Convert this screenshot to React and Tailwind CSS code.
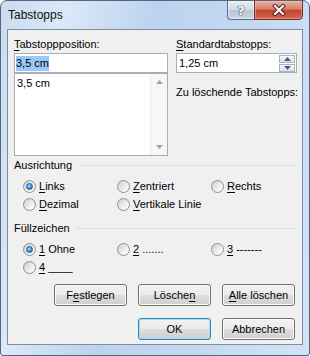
import React from 'react';

const U = ({ children }) => (
    <span className="underline underline-offset-[2px] decoration-[1px]">{children}</span>
);

function Radio({ checked, children }) {
    return (
        <div className="flex items-center h-[13px] gap-[3px]">
            <span className="w-[13px] h-[13px] rounded-full border border-[#8e8f8f] bg-[linear-gradient(135deg,#cfd0d0,#f4f4f4_70%,#ffffff)] flex items-center justify-center shrink-0">
                {checked && (
                    <span className="w-[7px] h-[7px] rounded-full bg-[radial-gradient(circle_at_40%_35%,#b4e0ff,#3a8be0_55%,#184f91)] border border-[#1f5a9a]" />
                )}
            </span>
            <span className="leading-[13px] whitespace-nowrap">{children}</span>
        </div>
    );
}

function Btn({ children, def }) {
    return (
        <button
            className={
                'w-[73px] h-[22px] rounded-[3px] border text-[11px] leading-[13px] text-black bg-[linear-gradient(#f2f2f2_0%,#ebebeb_48%,#dddddd_52%,#cfcfcf_100%)] ' +
                (def
                    ? 'border-[#3c7fb1] shadow-[inset_0_0_0_1px_#9fdcf5]'
                    : 'border-[#707070] shadow-[inset_0_0_0_1px_#fbfbfb]')
            }
        >
            {children}
        </button>
    );
}

function Section({ title }) {
    return (
        <div className="flex items-center h-[13px] pl-[6px] pr-[5px]">
            <span className="leading-[13px]">{title}</span>
            <div className="flex-1 h-px bg-[#d5dfe5] ml-[6px]" />
        </div>
    );
}

export default function App() {
    return (
        <div className="w-[310px] h-[356px] flex flex-col rounded-t-[7px] rounded-b-[3px] border border-[#56657a] bg-[linear-gradient(100deg,#cadcf1_0%,#dbe8f7_18%,#bcd3ef_42%,#c3d8f1_68%,#d2e3f5_100%)] font-['Liberation_Sans',Arial,sans-serif] text-[11px] text-black overflow-hidden">
            {/* title bar */}
            <div className="h-[28px] flex items-start justify-between shrink-0">
                <span className="mt-[7px] pl-[7px] text-[12px] leading-[14px] text-[#111]">Tabstopps</span>
                <div className="flex mt-[-1px] mr-[6px]">
                    <div className="w-[27px] h-[20px] rounded-bl-[4px] border border-[#5d6d82] border-r-0 bg-[linear-gradient(#e6edf5_0%,#d3dde9_48%,#b9c7d8_52%,#c9d6e4_100%)] shadow-[inset_0_0_0_1px_rgba(255,255,255,0.5)] flex items-center justify-center">
                        <span className="font-['DejaVu_Sans',sans-serif] font-bold text-[13px] leading-[13px] text-white [text-shadow:0_0_1px_#2d3d52,0_0_1px_#2d3d52,0_0_1px_#2d3d52]">?</span>
                    </div>
                    <div className="w-[49px] h-[20px] rounded-br-[4px] border border-[#6e2c24] bg-[linear-gradient(#ebb0a0_0%,#d8806b_45%,#c2432e_52%,#d3684e_100%)] shadow-[inset_0_0_0_1px_rgba(255,200,190,0.45)] flex items-center justify-center">
                        <svg width="14" height="12" viewBox="0 0 14 12">
                            <path d="M3 2 L11 10 M11 2 L3 10" stroke="#4a1a14" strokeWidth="4" strokeLinecap="square" />
                            <path d="M3 2 L11 10 M11 2 L3 10" stroke="#ffffff" strokeWidth="2.2" strokeLinecap="square" />
                        </svg>
                    </div>
                </div>
            </div>

            {/* content */}
            <div className="mx-[6px] mb-[10px] h-[316px] border border-[#7d8da2] bg-[#f0f0f0] pt-[8px] flex flex-col">
                <div className="flex pl-[6px]">
                    {/* left column */}
                    <div className="w-[154px] flex flex-col">
                        <span className="leading-[13px] h-[13px]"><U>T</U>abstoppposition:</span>
                        <div className="mt-[2px] h-[20px] border border-[#abadb3] bg-white flex items-center pl-[1px]">
                            <span className="bg-[#99c9f7] leading-[15px]">3,5 cm</span>
                        </div>
                        <div className="h-[83px] border border-[#abadb3] bg-white flex">
                            <div className="flex-1 pl-[2px] pt-[3px] leading-[13px]">3,5 cm</div>
                            <div className="w-[17px] bg-[#f7f7f7] border-l border-[#ececec] flex flex-col justify-between items-center py-[6px]">
                                <svg width="7" height="4" viewBox="0 0 7 4"><path d="M0 4 L3.5 0 L7 4 Z" fill="#a3a3a3" /></svg>
                                <svg width="7" height="4" viewBox="0 0 7 4"><path d="M0 0 L3.5 4 L7 0 Z" fill="#a3a3a3" /></svg>
                            </div>
                        </div>
                    </div>
                    {/* right column */}
                    <div className="w-[121px] ml-[8px] flex flex-col">
                        <span className="leading-[13px] h-[13px]"><U>S</U>tandardtabstopps:</span>
                        <div className="mt-[2px] h-[20px] border border-[#abadb3] bg-white flex items-center pl-[2px]">
                            <span className="flex-1 leading-[13px]">1,25 cm</span>
                            <div className="flex flex-col gap-[1px] mr-[1px]">
                                <div className="w-[16px] h-[8px] border border-[#a9b3bf] bg-[linear-gradient(#f5f7f9,#dde3ea)] flex items-center justify-center">
                                    <svg width="7" height="4" viewBox="0 0 7 4"><path d="M0 4 L3.5 0 L7 4 Z" fill="#4b5d80" /></svg>
                                </div>
                                <div className="w-[16px] h-[8px] border border-[#a9b3bf] bg-[linear-gradient(#f5f7f9,#dde3ea)] flex items-center justify-center">
                                    <svg width="7" height="4" viewBox="0 0 7 4"><path d="M0 0 L3.5 4 L7 0 Z" fill="#4b5d80" /></svg>
                                </div>
                            </div>
                        </div>
                        <span className="mt-[13px] leading-[13px] whitespace-nowrap">Zu löschende Tabstopps:</span>
                    </div>
                </div>

                <div className="mt-[3px]">
                    <Section title="Ausrichtung" />
                </div>
                <div className="mt-[8px] grid grid-cols-[94px_94px_1fr] gap-y-[5px] pl-[15px]">
                    <Radio checked><U>L</U>inks</Radio>
                    <Radio><U>Z</U>entriert</Radio>
                    <Radio><U>R</U>echts</Radio>
                    <Radio><U>D</U>ezimal</Radio>
                    <Radio><U>V</U>ertikale Linie</Radio>
                </div>

                <div className="mt-[11px]">
                    <Section title="Füllzeichen" />
                </div>
                <div className="mt-[8px] grid grid-cols-[94px_94px_1fr] gap-y-[5px] pl-[15px]">
                    <Radio checked><U>1</U> Ohne</Radio>
                    <Radio><U>2</U> .......</Radio>
                    <Radio><U>3</U> -------</Radio>
                    <Radio><U>4</U> ____</Radio>
                </div>

                <div className="mt-[10px] flex justify-end gap-[11px] pr-[7px]">
                    <Btn>F<U>e</U>stlegen</Btn>
                    <Btn>Lösche<U>n</U></Btn>
                    <Btn><U>A</U>lle löschen</Btn>
                </div>
                <div className="mt-[12px] flex justify-end gap-[11px] pr-[7px]">
                    <Btn def>OK</Btn>
                    <Btn>Abbrechen</Btn>
                </div>
            </div>
        </div>
    );
}
